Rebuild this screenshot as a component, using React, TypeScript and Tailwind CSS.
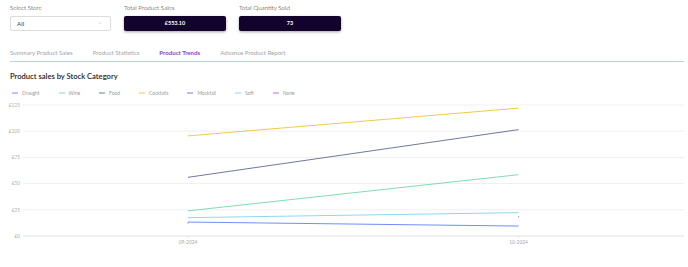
import React from 'react';

type Series = { name: string; color: string; from: number; to: number };

const series: Series[] = [
  { name: 'Draught', color: '#6f8ff5', from: 13.3, to: 9.5 },
  { name: 'Wine', color: '#7fdcb4', from: 24, to: 58.5 },
  { name: 'Food', color: '#6d7b98', from: 56, to: 101.5 },
  { name: 'Cocktails', color: '#f5c84c', from: 95.5, to: 122 },
  { name: 'Mocktail', color: '#8676ef', from: 13, to: 18.5 },
  { name: 'Soft', color: '#8fd6f2', from: 17.5, to: 22.3 },
  { name: 'None', color: '#a878e0', from: 12.6, to: 18.5 },
];

const tabs = ['Summary Product Sales', 'Product Statistics', 'Product Trends', 'Advance Product Report'];

// chart geometry (page px)
const X0 = 23;
const X1 = 684;
const Y0 = 235;
const PX_PER = (235 - 104) / 125;
const yOf = (v: number) => Y0 - v * PX_PER;
const ticks = [0, 25, 50, 75, 100, 125];
const cats = [
  { label: '09-2024', x: 188 },
  { label: '10-2024', x: 518.5 },
];

const App: React.FC = () => {
  return (
    <div className="w-[688px] h-[267px] bg-white overflow-hidden" style={{ fontFamily: 'Lato, "Noto Sans", sans-serif' }}>
      {/* Filters + totals */}
      <div className="flex gap-[13px] px-[10px] pt-[4px]">
        <div className="w-[101px]">
          <div className="text-[6.2px] leading-[8px] font-light text-[#111]">Select Store</div>
          <div className="mt-[4px] h-[15px] border border-[#dcdcdc] rounded-[2px] flex items-center justify-between pl-[6px] pr-[8px]">
            <span className="text-[6.2px] text-[#444]">All</span>
            <svg width="4" height="3" viewBox="0 0 4 3">
              <path d="M0.5 0.5 L2 2 L3.5 0.5" fill="none" stroke="#c8c8c8" strokeWidth="0.6" />
            </svg>
          </div>
        </div>
        <div className="w-[102px]">
          <div className="text-[6.2px] leading-[8px] font-light text-[#111]">Total Product Sales</div>
          <div className="mt-[4px] h-[15px] rounded-[2px] bg-[#13032c] shadow-[0_1px_3px_rgba(0,0,0,0.35)] flex items-center justify-center">
            <span className="text-[5.5px] font-bold text-white">£553.10</span>
          </div>
        </div>
        <div className="w-[102px]">
          <div className="text-[6.2px] leading-[8px] font-light text-[#111]">Total Quantity Sold</div>
          <div className="mt-[4px] h-[15px] rounded-[2px] bg-[#13032c] shadow-[0_1px_3px_rgba(0,0,0,0.35)] flex items-center justify-center">
            <span className="text-[5.5px] font-bold text-white">73</span>
          </div>
        </div>
      </div>

      {/* Tabs */}
      <div className="ml-[10px] mr-[4px] mt-[18px] border-b border-[#bcd0ef] flex gap-[20px] pb-[4px]">
        {tabs.map((t) => (
          <span
            key={t}
            className={
              t === 'Product Trends'
                ? 'text-[6.1px] leading-[8px] font-bold text-[#8a3fd6]'
                : 'text-[6.1px] leading-[8px] text-[#a3a3a3]'
            }
          >
            {t}
          </span>
        ))}
      </div>

      {/* Title */}
      <div className="px-[10px] mt-[9px] text-[7.6px] leading-[10px] font-semibold text-[#222]">
        Product sales by Stock Category
      </div>

      {/* Legend */}
      <div className="flex gap-[19px] pl-[12px] mt-[9px]">
        {series.map((s) => (
          <div key={s.name} className="flex items-center gap-[4px]">
            <svg width="6" height="2" className="block">
              <rect x="0" y="0.5" width="6" height="1" fill={s.color} />
            </svg>
            <span className="text-[4.9px] leading-[6px] text-[#9a9a9a]">{s.name}</span>
          </div>
        ))}
      </div>

      {/* Chart */}
      <svg className="block mt-[3px]" width="688" height="160" viewBox="0 98 688 160">
        {ticks.map((t) => (
          <g key={t}>
            <line x1={X0} x2={X1} y1={yOf(t)} y2={yOf(t)} stroke={t === 0 ? '#e2e2e2' : '#efefef'} strokeWidth="1" />
            <text x={20} y={yOf(t) + 1.7} textAnchor="end" fontSize="4.8" fill="#b0b0b0" fontFamily="Lato, sans-serif">
              £{t}
            </text>
          </g>
        ))}
        {cats.map((c) => (
          <g key={c.label}>
            <line x1={c.x} x2={c.x} y1={Y0} y2={Y0 + 2} stroke="#d8d8d8" strokeWidth="0.6" />
            <text x={c.x} y={Y0 + 7.5} textAnchor="middle" fontSize="4.8" fill="#a8a8a8" fontFamily="Lato, sans-serif">
              {c.label}
            </text>
          </g>
        ))}
        {series
          .filter((s) => s.name !== 'Mocktail' && s.name !== 'None')
          .map((s) => (
            <line
              key={s.name}
              x1={cats[0].x}
              y1={yOf(s.from)}
              x2={cats[1].x}
              y2={yOf(s.to)}
              stroke={s.color}
              strokeWidth="1"
            />
          ))}
        {/* tiny points for small series */}
        <rect x={187.6} y={yOf(12.6) - 0.6} width="0.8" height="1.6" fill="#8676ef" />
        <rect x={518.1} y={yOf(18.5) - 0.6} width="0.8" height="1.4" fill="#a878e0" />
      </svg>
    </div>
  );
};

export default App;
